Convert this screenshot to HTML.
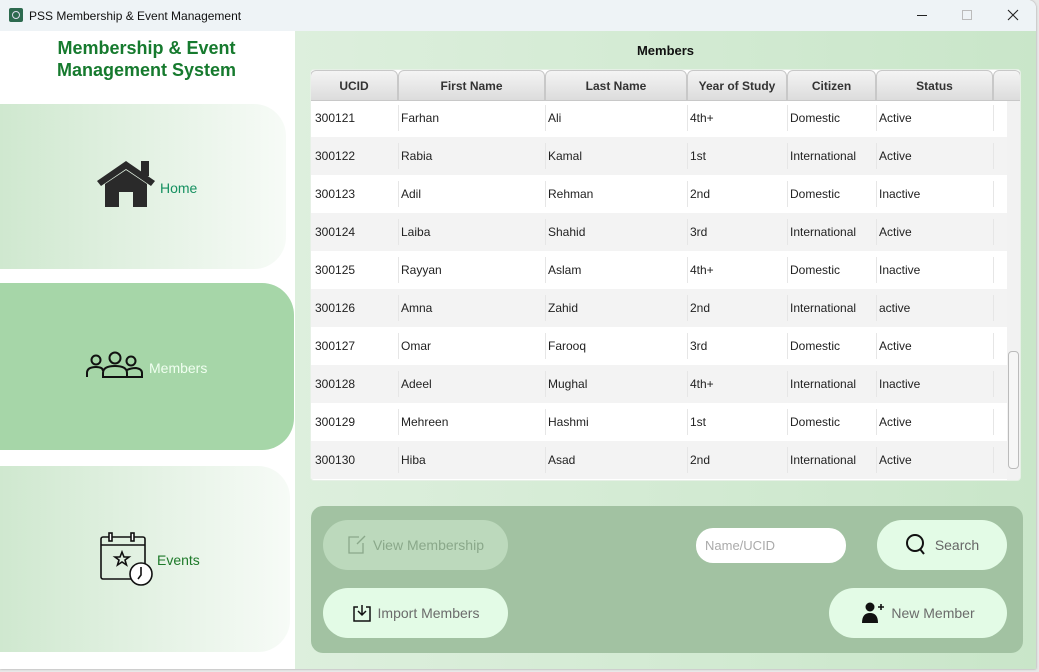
<!DOCTYPE html>
<html><head><style>
*{box-sizing:border-box;margin:0;padding:0}
body{width:1039px;height:672px;background:#e8e8e8;font-family:"Liberation Sans",sans-serif;position:relative;overflow:hidden}
.win{position:absolute;left:0;top:0;width:1036px;height:669px;background:#fff;border-radius:0 8px 0 0;overflow:hidden;box-shadow:0 0 2px #999}
.title{position:absolute;left:0;top:0;width:100%;height:31px;background:#eef3f6;font-size:12px;color:#111}
.side{position:absolute;left:0;top:31px;width:295px;height:638px;background:#fff}
.main{position:absolute;left:295px;top:31px;width:741px;height:638px;background:linear-gradient(90deg,#ddefdd,#c9e6c9)}
.card{position:absolute;left:0;border-radius:0 32px 32px 0;}
.g{background:linear-gradient(90deg,#cfe8cf,#f7fbf7)}
.lbl{position:absolute;font-size:14px}
.tbl{position:absolute;left:310px;top:69px;width:711px;height:412px;background:#fff;border-radius:4px;overflow:hidden;border:1px solid #e6f0e6}
.hd{position:absolute;top:0;height:31px;background:linear-gradient(#f4f4f4,#dcdcdc);border:1px solid #c8c8c8;border-radius:6px 6px 0 0;font-weight:bold;font-size:12px;color:#333;text-align:center;line-height:30px}
.row{position:absolute;left:0;width:696px;height:38px;font-size:12px;color:#222}
.row span{position:absolute;top:12px}
.row i{position:absolute;top:6px;width:1px;height:26px;background:#e6e6e6}
.btn{position:absolute;border-radius:25px;background:#e3fbe6;font-size:14px;color:#6b6b6b;display:flex;align-items:center;justify-content:center;gap:6px}
</style></head><body>
<div class="win">
<div class="title">
 <div style="position:absolute;left:9px;top:8px;width:14px;height:14px;background:#2d6a4f;border-radius:2px"><div style="margin:3px;width:8px;height:8px;border:1.5px solid #dde;border-radius:50%"></div></div>
 <div style="position:absolute;left:29px;top:9px">PSS Membership &amp; Event Management</div>
 <div style="position:absolute;left:917px;top:15px;width:10px;height:1px;background:#222"></div>
 <div style="position:absolute;left:962px;top:10px;width:10px;height:10px;border:1px solid #bbb"></div>
 <svg style="position:absolute;left:1007px;top:9px" width="12" height="12" viewBox="0 0 12 12" stroke="#222" stroke-width="1.1"><path d="M1 1 L11 11 M11 1 L1 11"/></svg>
</div>
<div class="side">
 <div style="position:absolute;left:0;top:6px;width:293px;text-align:center;font-weight:bold;font-size:18px;line-height:22px;color:#167a2e">Membership &amp; Event<br>Management System</div>
 <div class="card g" style="top:73px;width:286px;height:165px">
  <svg style="position:absolute;left:95px;top:55px" width="62" height="50" viewBox="0 0 62 50"><path d="M2 22 L31 2 L60 22 L56 27 L31 10 L6 27Z" fill="#2a2a2a"/><rect x="46" y="2" width="8" height="15" fill="#2a2a2a"/><path d="M10 25 L31 11 L52 25 L52 48 L38 48 L38 33 L24 33 L24 48 L10 48Z" fill="#2a2a2a"/></svg>
  <div class="lbl" style="left:160px;top:76px;color:#159060">Home</div>
 </div>
 <div class="card" style="top:252px;width:294px;height:167px;background:#a6d6a8">
  <svg style="position:absolute;left:86px;top:68px" width="58" height="28" viewBox="0 0 58 28" fill="none" stroke="#111" stroke-width="2"><circle cx="10" cy="9" r="4.5"/><path d="M1 26 V22 Q1 16 10 16 Q17 16 17 20"/><circle cx="29" cy="7" r="5.5"/><path d="M17 26 V22 Q17 15 29 15 Q41 15 41 22 V26 Z"/><circle cx="45" cy="10" r="4.5"/><path d="M41 19 Q45 17 50 17 Q56 18 56 22 V26 H41"/></svg>
  <div class="lbl" style="left:149px;top:77px;color:#f0fff0">Members</div>
 </div>
 <div class="card g" style="top:435px;width:290px;height:186px">
  <svg style="position:absolute;left:99px;top:65px" width="56" height="56" viewBox="0 0 56 56" fill="none" stroke="#111" stroke-width="1.6"><rect x="2" y="6" width="44" height="42" rx="2"/><line x1="2" y1="14" x2="46" y2="14"/><rect x="10" y="2" width="3" height="8" fill="#fff"/><rect x="32" y="2" width="3" height="8" fill="#fff"/><path d="M23 21 l2 5 h5 l-4 3 l1.5 5 l-4.5-3 l-4.5 3 l1.5-5 l-4-3 h5z"/><circle cx="42" cy="43" r="11" fill="#fff"/><path d="M42 36 V44 L39 48"/></svg>
  <div class="lbl" style="left:157px;top:86px;color:#1e7a2a">Events</div>
 </div>
</div>
<div class="main">
 <div style="position:absolute;left:0;top:12px;width:741px;text-align:center;font-weight:bold;font-size:13px;color:#111">Members</div>
 <div style="position:absolute;left:16px;top:475px;width:712px;height:147px;background:#a2c2a2;border-radius:12px"></div>
 <div class="btn" style="left:28px;top:489px;width:185px;height:50px;background:#bcd9bc;color:#8aa88a"><svg width="20" height="20" viewBox="0 0 20 20" fill="none" stroke="#8aa88a" stroke-width="1.3"><path d="M12 2 H2 V18 H16 V8"/><path d="M18 1 L10 9"/></svg>View Membership</div>
 <div style="position:absolute;left:401px;top:497px;width:150px;height:35px;background:#fff;border-radius:17px;font-size:13px;color:#aaa;padding:10px 0 0 9px">Name/UCID</div>
 <div class="btn" style="left:582px;top:489px;width:130px;height:50px;color:#666"><svg width="24" height="24" viewBox="0 0 24 24" fill="none" stroke="#111" stroke-width="2"><circle cx="10" cy="10" r="8"/><path d="M15 16 L19 21"/></svg>Search</div>
 <div class="btn" style="left:28px;top:557px;width:185px;height:50px"><svg width="20" height="20" viewBox="0 0 20 20" fill="none" stroke="#111" stroke-width="1.5"><path d="M6 4 H2 V18 H18 V4 H14"/><path d="M10 2 V12 M6 8 L10 12 L14 8"/></svg>Import Members</div>
 <div class="btn" style="left:534px;top:557px;width:178px;height:50px"><svg width="24" height="22" viewBox="0 0 24 22" fill="#111"><circle cx="9" cy="5" r="4.5"/><path d="M1 21 Q1 11 9 11 Q17 11 17 21Z"/><path d="M17 5 h6 M20 2 v6" stroke="#111" stroke-width="1.6"/></svg>New Member</div>
</div>
<div class="tbl">
 <div id="rows"></div>
 <div class="hd" style="left:-1px;width:88px">UCID</div>
 <div class="hd" style="left:87px;width:147px">First Name</div>
 <div class="hd" style="left:234px;width:142px">Last Name</div>
 <div class="hd" style="left:376px;width:100px">Year of Study</div>
 <div class="hd" style="left:476px;width:89px">Citizen</div>
 <div class="hd" style="left:565px;width:117px">Status</div>
 <div class="hd" style="left:682px;width:28px"></div>
 <div style="position:absolute;left:696px;top:31px;width:14px;height:380px;background:#f2f2f2"><div style="position:absolute;left:1px;top:250px;width:11px;height:118px;border:1px solid #bbb;border-radius:4px;background:#f6f6f6"></div></div>
</div>
</div>
<script>
var d=[["300121","Farhan","Ali","4th+","Domestic","Active"],["300122","Rabia","Kamal","1st","International","Active"],["300123","Adil","Rehman","2nd","Domestic","Inactive"],["300124","Laiba","Shahid","3rd","International","Active"],["300125","Rayyan","Aslam","4th+","Domestic","Inactive"],["300126","Amna","Zahid","2nd","International","active"],["300127","Omar","Farooq","3rd","Domestic","Active"],["300128","Adeel","Mughal","4th+","International","Inactive"],["300129","Mehreen","Hashmi","1st","Domestic","Active"],["300130","Hiba","Asad","2nd","International","Active"]];
var xs=[4,90,237,379,479,568],ls=[87,234,376,476,565,682],h="";
d.forEach(function(r,i){h+='<div class="row" style="top:'+(29+i*38)+'px;background:'+(i%2?'#f3f3f3':'#fff')+'">';r.forEach(function(c,j){h+='<span style="left:'+xs[j]+'px">'+c+'</span><i style="left:'+ls[j]+'px"></i>'});h+='</div>'});
document.getElementById('rows').innerHTML=h;
</script>
</body></html>
